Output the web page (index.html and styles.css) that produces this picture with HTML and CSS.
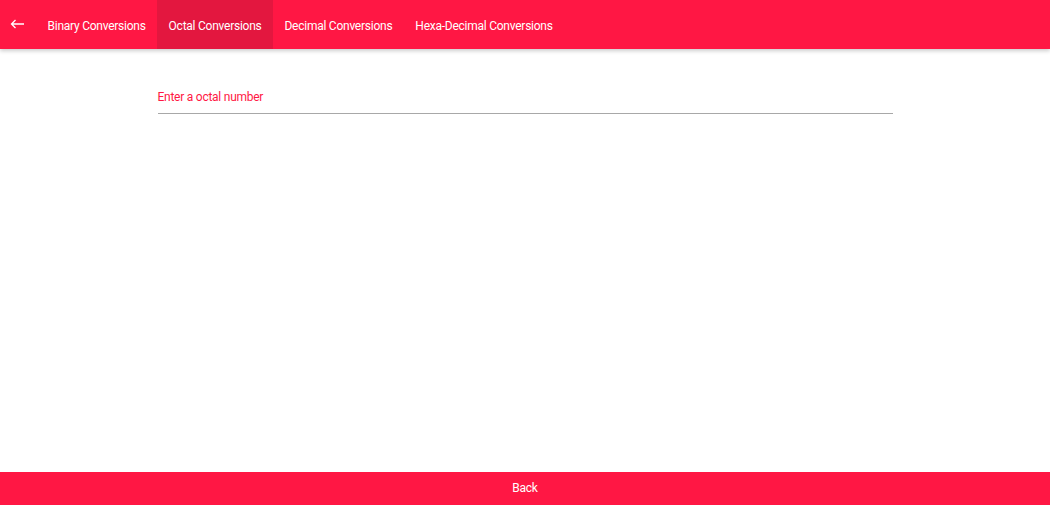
FILE: index.html
```html
<!DOCTYPE html>
<html>
    <head>
        <title>Octal Conversions</title>
        <meta charset="utf-8"/>
        <link rel="stylesheet" href="styles.css">
    </head>
    <body class="body">
        <header class="header">
            <a class="back_icon">
                <svg width="16" height="12" viewBox="0 0 16 12">
                    <path d="M2.5 6H15M6.5 2L2.5 6L6.5 10" stroke="#fff" stroke-width="1.3" fill="none"/>
                </svg>
            </a>
            <nav class="tabs">
                <a class="tab">Binary Conversions</a>
                <a class="tab active">Octal Conversions</a>
                <a class="tab">Decimal Conversions</a>
                <a class="tab">Hexa-Decimal Conversions</a>
            </nav>
        </header>
        <main class="main">
            <div class="field">
                <label class="field_label">Enter a octal number</label>
            </div>
        </main>
        <footer class="footer">Back</footer>
    </body>
</html>
```
FILE: styles.css
```css
.body{
    margin:0px;
    height:100vh;
    display:flex;
    flex-direction:column;
    font-family:Roboto, "Liberation Sans", sans-serif;
    letter-spacing:-0.25px;
    background-color:white;
}
.header{
    background-color:#ff1744;
    height:49px;
    display:flex;
    align-items:stretch;
    box-shadow:0px 2px 4px rgba(0,0,0,0.2);
    position:relative;
}
.back_icon{
    width:36px;
    padding-left:9px;
    padding-top:15px;
    box-sizing:border-box;
}
.tabs{
    display:flex;
}
.tab{
    color:white;
    font-size:12px;
    padding:0px 11.5px;
    display:flex;
    align-items:center;
    padding-top:2px;
}
.tab.active{
    background-color:#e3173f;
}
.main{
    flex:1;
    padding:0px 15%;
}
.field{
    margin-top:41px;
    border-bottom:1px solid #a8a8a8;
    padding-bottom:9px;
    font-size:12px;
}
.field_label{
    color:#ff1744;
}
.footer{
    background-color:#ff1744;
    color:white;
    height:33px;
    display:flex;
    justify-content:center;
    align-items:center;
    font-size:12px;
    padding-bottom:2px;
    box-sizing:border-box;
}
```
